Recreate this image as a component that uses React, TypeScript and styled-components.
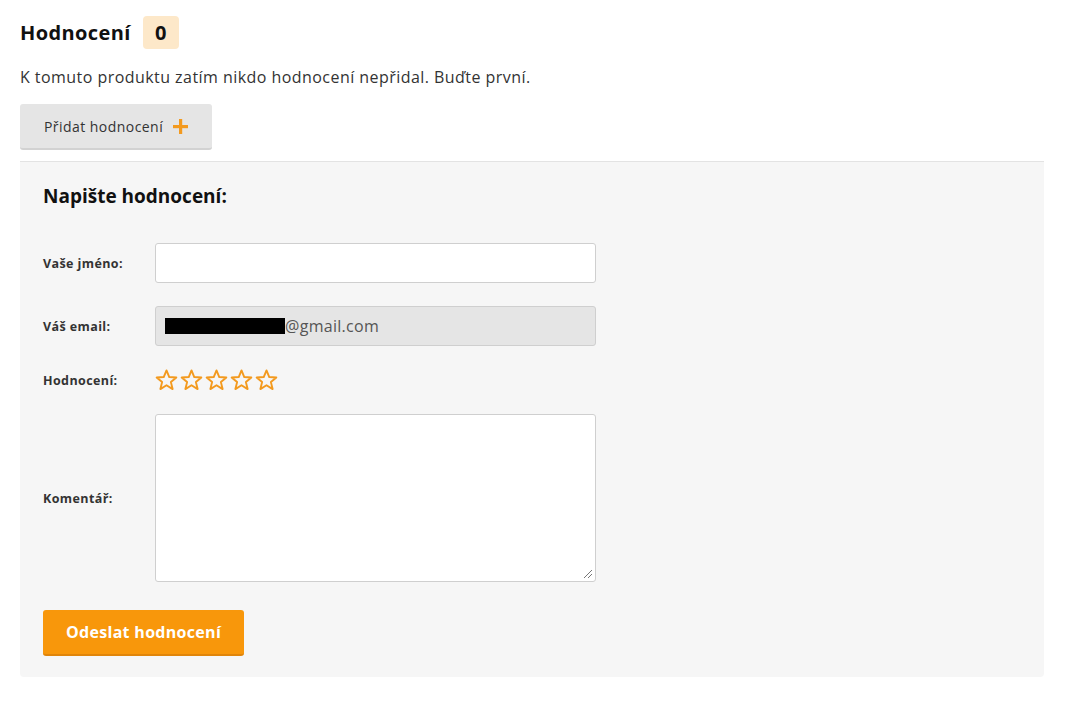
import React from 'react';
import styled, { createGlobalStyle } from 'styled-components';

const GlobalStyle = createGlobalStyle`
  html, body {
    margin: 0;
    padding: 0;
    background: #ffffff;
  }
  body {
    font-family: "Open Sans", "Lato", sans-serif;
    color: #333333;
  }
`;

const Page = styled.div`
  width: 1024px;
  padding: 16px 21px 0 20px;
`;

const HeaderRow = styled.div`
  display: flex;
  align-items: center;
  gap: 12px;
  height: 33px;
`;

const Heading = styled.h2`
  margin: 0;
  font-size: 20px;
  letter-spacing: 0.4px;
  font-weight: 700;
  color: #111111;
`;

const CountBadge = styled.span`
  display: inline-flex;
  align-items: center;
  justify-content: center;
  width: 36px;
  height: 33px;
  border-radius: 4px;
  background: #fde8c9;
  font-size: 20px;
  font-weight: 700;
  color: #111111;
`;

const Intro = styled.p`
  margin: 16px 0 0;
  font-size: 16px;
  letter-spacing: 0.45px;
  line-height: 24px;
  color: #333333;
`;

const AddButton = styled.button`
  display: flex;
  align-items: center;
  gap: 10px;
  margin-top: 15px;
  height: 46px;
  padding: 0 24px;
  border: none;
  border-bottom: 2px solid #d2d2d2;
  border-radius: 3px;
  background: #e5e5e5;
  font-family: inherit;
  font-size: 14px;
  letter-spacing: 0.45px;
  color: #333333;
  cursor: pointer;
`;

const Divider = styled.div`
  margin-top: 11px;
  height: 1px;
  background: #e3e3e3;
`;

const Panel = styled.section`
  background: #f6f6f6;
  padding: 21px 23px 21px;
  border-radius: 0 0 4px 4px;
`;

const PanelTitle = styled.h3`
  margin: 0 0 33px;
  font-size: 19px;
  line-height: 27px;
  font-weight: 700;
  color: #111111;
`;

const FormRow = styled.div`
  display: flex;
  align-items: center;
  margin-bottom: 23px;
`;

const Label = styled.label`
  width: 112px;
  flex: none;
  font-size: 12.5px;
  letter-spacing: 0.4px;
  font-weight: 700;
  color: #333333;
`;

const TextInput = styled.div<{ $disabled?: boolean }>`
  box-sizing: border-box;
  display: flex;
  align-items: center;
  width: 441px;
  height: 40px;
  padding: 0 9px;
  border: 1px solid #cfcfcf;
  border-radius: 3px;
  background: ${({ $disabled }) => ($disabled ? '#e5e5e5' : '#ffffff')};
  font-family: "Open Sans", sans-serif;
  font-size: 16px;
  letter-spacing: 0.3px;
  color: #555555;
`;

const Redacted = styled.span`
  display: inline-block;
  width: 120px;
  height: 16px;
  background: #000000;
`;

const Stars = styled.div`
  display: flex;
  gap: 2px;
  height: 22px;
`;

const TextArea = styled.div`
  position: relative;
  box-sizing: border-box;
  width: 441px;
  height: 168px;
  border: 1px solid #cfcfcf;
  border-radius: 3px;
  background: #ffffff;
`;

const ResizeGrip = styled.svg`
  position: absolute;
  right: 2px;
  bottom: 2px;
`;

const SubmitButton = styled.button`
  margin-top: 5px;
  height: 46px;
  padding: 0 23px;
  border: none;
  border-bottom: 2px solid #e0850a;
  border-radius: 3px;
  background: #f8970b;
  font-family: inherit;
  font-size: 16px;
  letter-spacing: 0.3px;
  font-weight: 700;
  color: #ffffff;
  cursor: pointer;
`;

const Plus = () => (
  <svg width="15" height="15" viewBox="0 0 15 15">
    <rect x="6" y="0" width="3.2" height="15" fill="#f39a1f" />
    <rect x="0" y="6" width="15" height="3.2" fill="#f39a1f" />
  </svg>
);

const Star = () => (
  <svg width="23" height="22" viewBox="0 0 24 23">
    <polygon
      points="12,1.5 14.9,8.4 22.3,8.9 16.6,13.7 18.4,21 12,17 5.6,21 7.4,13.7 1.7,8.9 9.1,8.4"
      fill="none"
      stroke="#f39a1f"
      strokeWidth="2"
      strokeLinejoin="round"
    />
  </svg>
);

const App: React.FC = () => {
  return (
    <Page>
      <GlobalStyle />
      <HeaderRow>
        <Heading>Hodnocení</Heading>
        <CountBadge>0</CountBadge>
      </HeaderRow>
      <Intro>K tomuto produktu zatím nikdo hodnocení nepřidal. Buďte první.</Intro>
      <AddButton>
        Přidat hodnocení <Plus />
      </AddButton>
      <Divider />
      <Panel>
        <PanelTitle>Napište hodnocení:</PanelTitle>
        <FormRow>
          <Label>Vaše jméno:</Label>
          <TextInput />
        </FormRow>
        <FormRow>
          <Label>Váš email:</Label>
          <TextInput $disabled>
            <Redacted />@gmail.com
          </TextInput>
        </FormRow>
        <FormRow>
          <Label>Hodnocení:</Label>
          <Stars>
            {[0, 1, 2, 3, 4].map((i) => (
              <Star key={i} />
            ))}
          </Stars>
        </FormRow>
        <FormRow>
          <Label>Komentář:</Label>
          <TextArea>
            <ResizeGrip width="10" height="10" viewBox="0 0 10 10">
              <line x1="9" y1="1" x2="1" y2="9" stroke="#777" strokeWidth="1" />
              <line x1="9" y1="5" x2="5" y2="9" stroke="#777" strokeWidth="1" />
            </ResizeGrip>
          </TextArea>
        </FormRow>
        <SubmitButton>Odeslat hodnocení</SubmitButton>
      </Panel>
    </Page>
  );
};

export default App;
